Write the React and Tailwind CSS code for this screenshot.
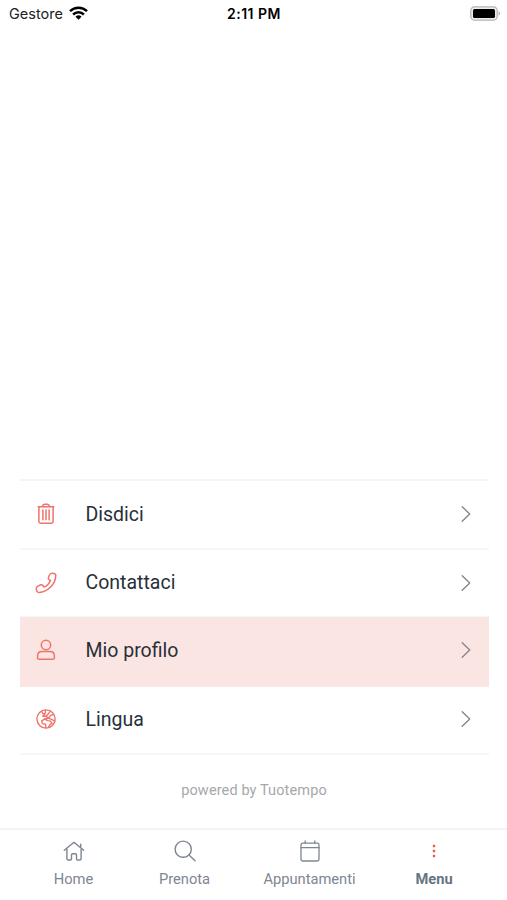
function TrashIcon() {
  return (
    <svg width="20" height="22" viewBox="0 0 20 22" fill="none" stroke="#f0736b" strokeWidth="1.5" strokeLinecap="round" strokeLinejoin="round">
      <path d="M2.2 3.700h15.600M6.200 3.400C6.700 2 7.500 1.300 8.700 1.300h2.600c1.200 0 2 .7 2.500 2.100M2.900 3.800v14.800c0 1.100.6 1.700 1.600 1.700h11c1 0 1.600-.6 1.600-1.700V3.800" />
      <path d="M6.900 7v9.800M10 7v9.800M13.100 7v9.800" />
    </svg>
  );
}

function PhoneIcon() {
  return (
    <svg width="22" height="22" viewBox="0 0 22 22" fill="none" stroke="#f0736b" strokeWidth="1.5" strokeLinejoin="round">
      <path d="M15.800 1.600c1.300-.5 3.200-.3 4.200.3.600.4.800.9.800 1.600-.2 8.600-8 16.500-16.800 16.900-1 0-1.500-.2-1.900-.9-.7-1-.9-2.800-.5-4 .2-.7.600-1.100 1.200-1.400l3-1.300c.9-.3 1.600-.1 2.100.6l.9 1.700c3-1.100 5.500-3.500 6.700-6.600l-1.400-.9c-.7-.5-.9-1.100-.7-1.900l1.200-2.900c.2-.6.600-1 1.200-1.200z" />
    </svg>
  );
}

function UserIcon() {
  return (
    <svg width="20" height="22" viewBox="0 0 20 22" fill="none" stroke="#f0736b" strokeWidth="1.5" strokeLinejoin="round">
      <circle cx="10" cy="6" r="4.700" />
      <path d="M6 12.600h8c2.600 0 4.400 1.900 4.400 4.500v1.600c0 1-.7 1.600-1.700 1.600H3.300c-1 0-1.700-.6-1.700-1.600v-1.600c0-2.600 1.800-4.500 4.400-4.500z" />
    </svg>
  );
}

function GlobeIcon() {
  return (
    <svg width="20" height="20" viewBox="0 0 20 20" fill="none" stroke="#f0736b" strokeWidth="1.400" strokeLinecap="round" strokeLinejoin="round">
      <circle cx="10" cy="10" r="9.100" />
      <path d="M5.700 2.300l1 2.200 2.300.4M9.600 1.200L9 4.900 6.800 7.300l3.300-.2 2.100-2.200 2.200-2.800M10.100 7.100l2.100 2.100 2.500-2.800 2.600-.9M12.200 9.200l3.200 1.200 3.500 1.800" />
      <path d="M12.200 9.200L8.600 9.900 5.700 12.100l.7 2.500 3.100.7.400 3.600M8.600 9.900l2.800 1.700 2.700.3 1.900 2.200-2.100 1.700-1.400 2.400" />
    </svg>
  );
}

function ChevronIcon() {
  return (
    <svg width="10" height="18" viewBox="0 0 10 18" fill="none" stroke="#85888c" strokeWidth="1.400" strokeLinecap="round" strokeLinejoin="round">
      <path d="M1.200 1.700L8.700 9l-7.500 7.300" />
    </svg>
  );
}

function HomeIcon() {
  return (
    <svg width="22" height="22" viewBox="0 0 22 22" fill="none" stroke="#7d8691" strokeWidth="1.400" strokeLinecap="round" strokeLinejoin="round">
      <path d="M1.300 10.300L11 2.200l9.700 8.100M17.700 7.500V4.300M3.900 9v9.700c0 .9.400 1.300 1.200 1.300h2.300c.7 0 1.100-.4 1.100-1.100v-4.100c0-.7.400-1.100 1.100-1.100h2.800c.7 0 1.100.4 1.100 1.100v4.100c0 .7.4 1.100 1.100 1.100h2.300c.8 0 1.200-.4 1.200-1.300V9" />
    </svg>
  );
}

function SearchIcon() {
  return (
    <svg width="22" height="22" viewBox="0 0 22 22" fill="none" stroke="#7d8691" strokeWidth="1.400" strokeLinecap="round">
      <circle cx="9.200" cy="9.200" r="8.100" />
      <path d="M15 15l6 5.700" />
    </svg>
  );
}

function CalendarIcon() {
  return (
    <svg width="22" height="22" viewBox="0 0 22 22" fill="none" stroke="#7d8691" strokeWidth="1.300" strokeLinecap="round">
      <rect x="2" y="3.200" width="18" height="17.800" rx="1.800" />
      <path d="M2 7.700h18M6.200 1v2.200M15.800 1v2.200" />
    </svg>
  );
}

function DotsIcon() {
  return (
    <svg width="22" height="22" viewBox="0 0 22 22" fill="#e85a4a">
      <rect x="9.800" y="4.800" width="2.400" height="2.400" rx=".6" />
      <rect x="9.800" y="9.800" width="2.400" height="2.400" rx=".6" />
      <rect x="9.800" y="14.800" width="2.400" height="2.400" rx=".6" />
    </svg>
  );
}

const menuItems = [
  { label: 'Disdici', icon: TrashIcon },
  { label: 'Contattaci', icon: PhoneIcon },
  { label: 'Mio profilo', icon: UserIcon, active: true },
  { label: 'Lingua', icon: GlobeIcon },
];

const tabs = [
  { label: 'Home', icon: HomeIcon },
  { label: 'Prenota', icon: SearchIcon },
  { label: 'Appuntamenti', icon: CalendarIcon },
  { label: 'Menu', icon: DotsIcon, active: true },
];

function StatusBar() {
  return (
    <header className="grid h-7 grid-cols-3 items-center pl-[9px] pr-[6px] font-['Inter',sans-serif] text-black">
      <div className="flex items-center gap-[6px]">
        <span className="text-[14.500px] text-[#222]">Gestore</span>
        <svg width="19" height="14" viewBox="0 0 19 14" className="mb-0.5" fill="none" stroke="#000" strokeWidth="2.500">
          <path d="M1 5.200a12.200 12.200 0 0 1 17 0M4.100 8.500a7.700 7.700 0 0 1 10.800 0" />
          <path d="M6.500 10.700a4.300 4.300 0 0 1 6 0l-3 3z" fill="#000" stroke="none" />
        </svg>
      </div>
      <span className="pr-[2px] pb-[2px] text-center text-[14px] font-semibold tracking-[0.5px]">2:11 PM</span>
      <div className="mb-px flex justify-end">
        <svg width="31" height="15" viewBox="0 0 31 15">
          <rect x=".8" y=".8" width="26.400" height="13.400" rx="3.800" fill="#eee" stroke="#b5b5b5" strokeWidth="1.300" />
          <rect x="3" y="3" width="22" height="9" rx="1.600" fill="#000" />
          <path d="M28.600 5.200c1.900.8 1.900 3.800 0 4.600z" fill="#aaa" />
        </svg>
      </div>
    </header>
  );
}

function App() {
  return (
    <div className="flex h-[900px] w-[507px] flex-col bg-white font-['Roboto',sans-serif]">
      <StatusBar />

      {/* Menu list, kept at the bottom of the screen */}
      <main className="flex flex-1 flex-col justify-end pr-[18px] pl-5">
        <ul className="border-t-2 border-[#f6f6f7]">
          {menuItems.map(({ label, icon: Icon, active }) => (
            <li
              key={label}
              className={`flex items-center border-b-2 pr-[18px] pb-px pl-[14px] ${active ? '-mt-px h-[69.400px] border-[#f9e6e5] bg-[#fbe5e3]' : 'h-[68.400px] border-[#f6f6f7]'}`}
            >
              <span className="flex w-6 justify-center">
                <Icon />
              </span>
              <span className="ml-[27.500px] flex-1 pt-px text-[19.500px] text-[#283039]">{label}</span>
              <ChevronIcon />
            </li>
          ))}
        </ul>
        <p className="flex h-[73px] items-center justify-center pr-px pb-[2px] text-[14.500px] tracking-[0.120px] text-[#a5a8ab]">
          powered by Tuotempo
        </p>
      </main>

      {/* Bottom tabs */}
      <nav className="grid h-[72px] grid-cols-[111px_111px_139px_110px] border-t-2 border-[#f3f3f4] pt-[10px] pl-[18px]">
        {tabs.map(({ label, icon: Icon, active }) => (
          <div key={label} className="flex flex-col items-center gap-[7px]">
            <Icon />
            <span className={`text-[14.700px] leading-5 ${active ? 'font-bold text-[#667582]' : 'text-[#7d8691]'}`}>
              {label}
            </span>
          </div>
        ))}
      </nav>
    </div>
  );
}

export default App;
